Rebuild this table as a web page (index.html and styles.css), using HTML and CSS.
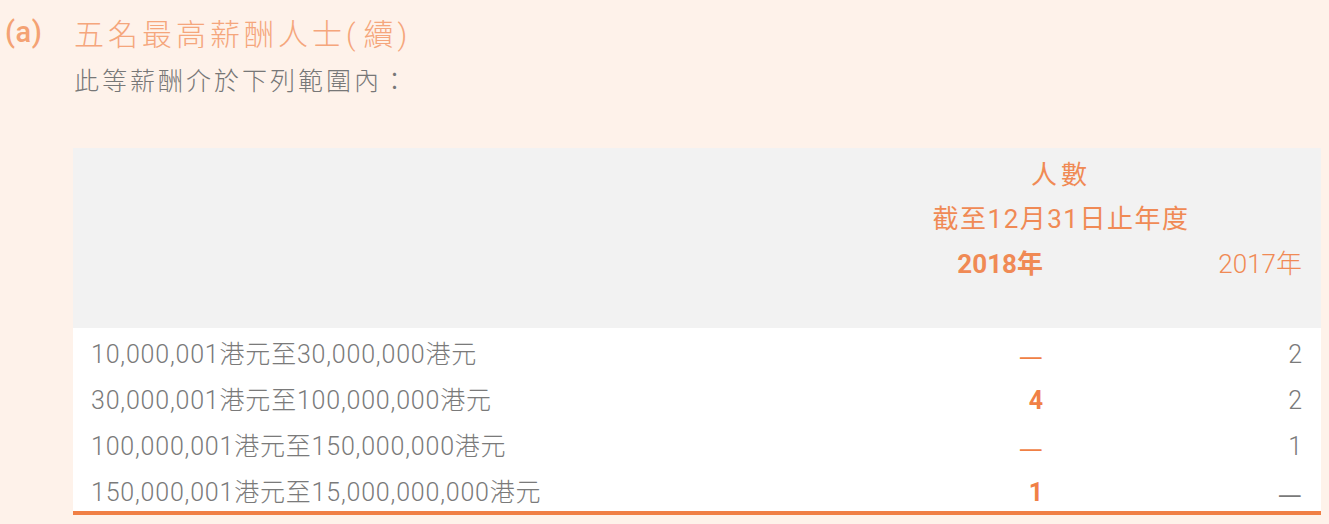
FILE: index.html
```html
<!DOCTYPE html>
<html lang="zh-Hant">
<head>
    <meta charset="UTF-8">
    <meta name="viewport" content="width=device-width, initial-scale=1.0">
    <title>五名最高薪酬人士</title>
    <link rel="stylesheet" href="styles.css">
</head>
<body>
    <div class="judul">
        <span class="nomor">(a)</span>
        <h1>五名最高薪酬人士<span class="kurung">(</span>續<span class="kurung">)</span></h1>
    </div>
    <p class="keterangan">此等薪酬介於下列範圍內：</p>

    <table class="tabel">
        <thead>
            <tr class="baris1">
                <th class="kosong" rowspan="3"></th>
                <th class="tengah atas" colspan="2">人數</th>
            </tr>
            <tr class="baris2">
                <th class="tengah" colspan="2">截至12月31日止年度</th>
            </tr>
            <tr class="tahun">
                <th class="kini">2018年</th>
                <th class="lalu">2017年</th>
            </tr>
        </thead>
        <tbody>
            <tr>
                <td class="label">10,000,001港元至30,000,000港元</td>
                <td class="kini"><span class="strip">—</span></td>
                <td class="lalu">2</td>
            </tr>
            <tr>
                <td class="label">30,000,001港元至100,000,000港元</td>
                <td class="kini">4</td>
                <td class="lalu">2</td>
            </tr>
            <tr>
                <td class="label">100,000,001港元至150,000,000港元</td>
                <td class="kini"><span class="strip">—</span></td>
                <td class="lalu">1</td>
            </tr>
            <tr>
                <td class="label">150,000,001港元至15,000,000,000港元</td>
                <td class="kini">1</td>
                <td class="lalu"><span class="strip">—</span></td>
            </tr>
        </tbody>
    </table>
</body>
</html>
```

FILE: styles.css
```css
body {
    font-family: Roboto, "Noto Sans CJK TC", sans-serif;
    margin: 0;
    padding: 12px 8px 0 5px;
    background-color: #fef2ea;
    color: #7a7a7a;
}

.judul {
    display: flex;
    align-items: center;
    height: 40px;
}

.nomor {
    width: 69px;
    font-size: 29px;
    color: #f4a274;
    font-weight: 500;
    letter-spacing: 0.5px;
}

.judul h1 {
    margin: 0;
    font-size: 30px;
    font-weight: 300;
    letter-spacing: 4px;
    color: #f5a67c;
}

.judul .kurung {
    margin: 0 4px 0 0;
}

.keterangan {
    margin: 11px 0 0 69px;
    font-size: 25px;
    font-weight: 300;
    letter-spacing: 3px;
    line-height: 38px;
    color: #777;
}

.tabel {
    margin: 47px 0 0 68px;
    width: 1248px;
    border-collapse: collapse;
    background-color: #fff;
    border-bottom: 4px solid #f07f45;
}

.tabel thead {
    background-color: #f2f2f2;
}

.tabel th {
    font-weight: 400;
    font-size: 26px;
    color: #f08a55;
    padding: 2px 0 0 0;
    line-height: 38px;
    vertical-align: top;
}

.tabel .baris1 {
    height: 50px;
}

.tabel .baris2 {
    height: 45px;
}

.tabel .tahun {
    height: 85px;
}

.tabel th.atas {
    padding-top: 8px;
    letter-spacing: 4px;
}

.tabel .tengah {
    text-align: center;
    letter-spacing: 1.5px;
}

.tabel .kosong {
    width: 728px;
}

.tabel th.kini {
    font-weight: 700;
}

.tabel th.lalu {
    font-weight: 300;
}

.kini,
.lalu {
    text-align: right;
    padding-right: 19px !important;
}

.kini {
    width: 242px;
}

.lalu {
    width: 240px;
}

.tabel tbody tr {
    height: 46px;
}

.tabel td {
    padding: 11px 0 0 0;
    font-size: 25px;
    font-weight: 300;
    line-height: 31px;
    vertical-align: top;
}

.tabel td.label {
    padding-left: 18px;
    letter-spacing: 0.8px;
}

.tabel td.kini {
    color: #f08045;
    font-weight: 700;
}

.strip {
    font-family: "Noto Sans CJK TC", sans-serif;
    font-weight: 400;
    font-size: 27px;
}
```
